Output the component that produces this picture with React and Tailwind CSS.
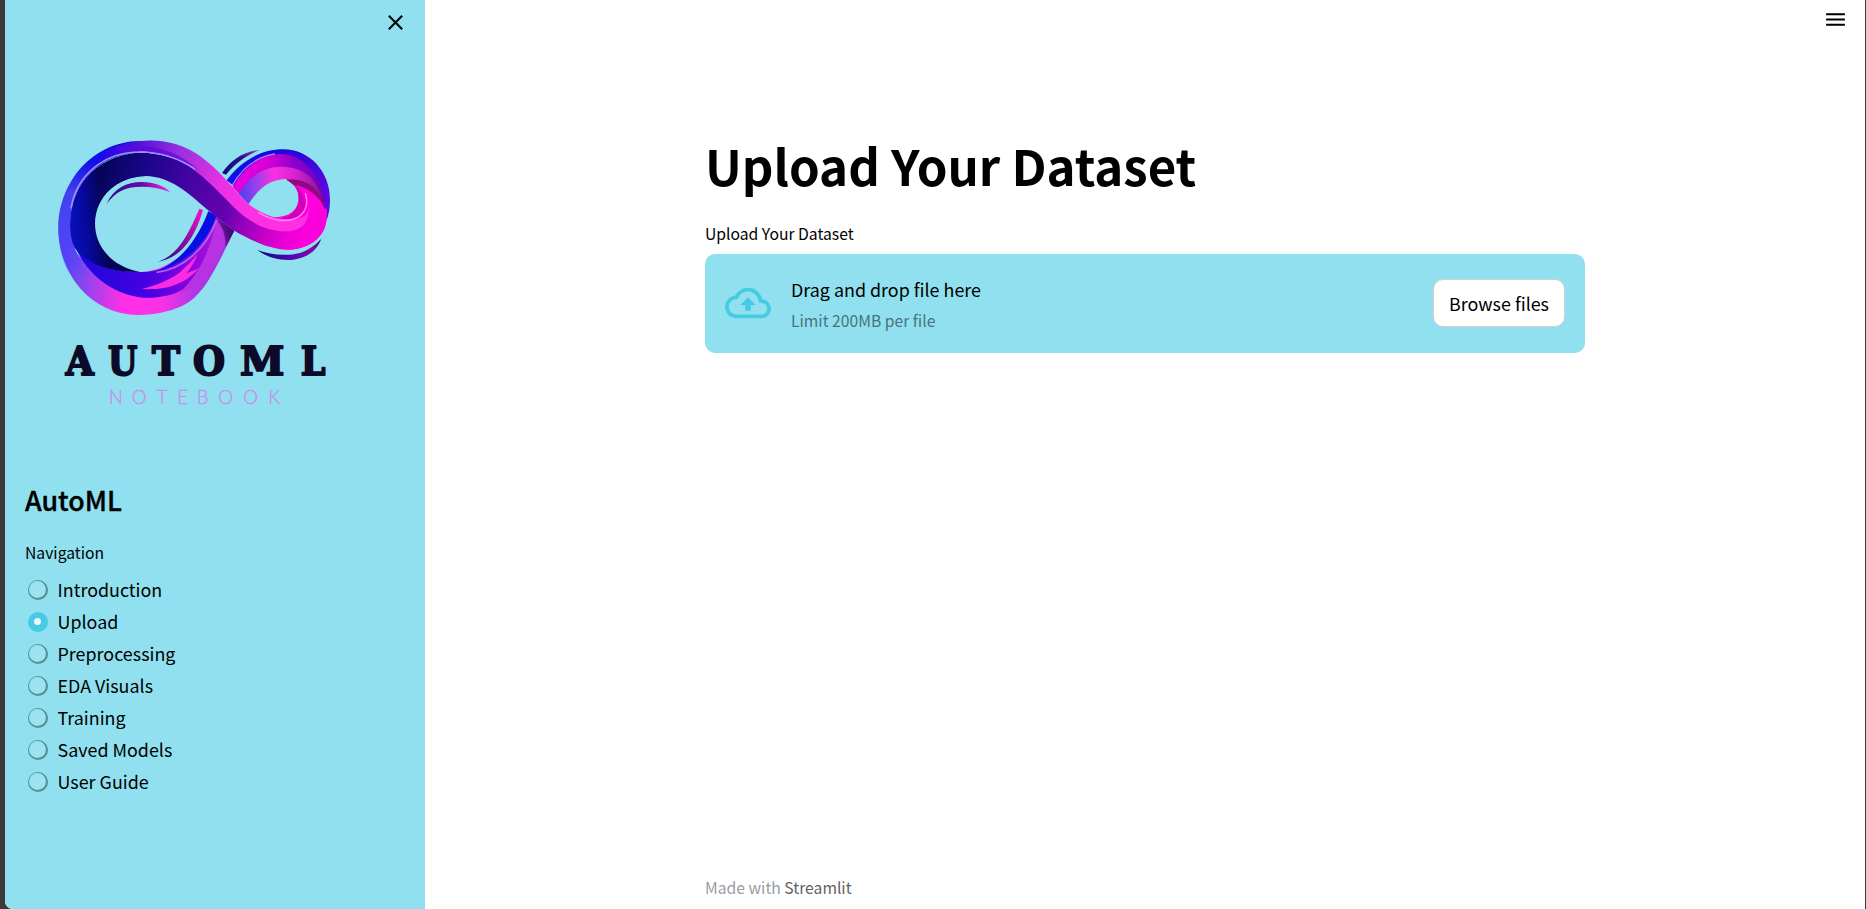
import React from "react";

const NAV = ["Introduction", "Upload", "Preprocessing", "EDA Visuals", "Training", "Saved Models", "User Guide"];

function Logo() {
  return (
    <svg className="block h-[300px] w-[310px]" viewBox="0 0 930 900" aria-label="AutoML Notebook">
      <defs>
        <linearGradient id="outer" gradientUnits="userSpaceOnUse" x1="55" y1="330" x2="580" y2="380">
          <stop offset="0" stopColor="#3f3df5" />
          <stop offset="0.14" stopColor="#7a48f0" />
          <stop offset="0.4" stopColor="#ff2fe6" />
          <stop offset="0.62" stopColor="#fb31e6" />
          <stop offset="0.8" stopColor="#b436e6" />
          <stop offset="1" stopColor="#a030da" />
        </linearGradient>
        <linearGradient id="leftEdge" gradientUnits="userSpaceOnUse" x1="90" y1="450" x2="240" y2="60">
          <stop offset="0" stopColor="#5a44f6" stopOpacity="0" />
          <stop offset="0.25" stopColor="#4c44f6" />
          <stop offset="0.55" stopColor="#4242ee" />
          <stop offset="0.8" stopColor="#1410ea" />
          <stop offset="1" stopColor="#1408e4" />
        </linearGradient>
        <linearGradient id="navy" gradientUnits="userSpaceOnUse" x1="90" y1="300" x2="190" y2="290">
          <stop offset="0" stopColor="#0810bc" />
          <stop offset="0.5" stopColor="#07089a" />
          <stop offset="1" stopColor="#06045a" />
        </linearGradient>
        <linearGradient id="under" gradientUnits="userSpaceOnUse" x1="190" y1="150" x2="740" y2="350">
          <stop offset="0" stopColor="#06055e" />
          <stop offset="0.2" stopColor="#1c058c" />
          <stop offset="0.45" stopColor="#4804a4" />
          <stop offset="0.65" stopColor="#6402b0" />
          <stop offset="0.85" stopColor="#b800c4" />
          <stop offset="1" stopColor="#f000d8" />
        </linearGradient>
        <linearGradient id="over" gradientUnits="userSpaceOnUse" x1="190" y1="70" x2="640" y2="250">
          <stop offset="0" stopColor="#1a08e4" />
          <stop offset="0.2" stopColor="#5a10dc" />
          <stop offset="0.45" stopColor="#9a30e0" />
          <stop offset="0.75" stopColor="#e830e4" />
          <stop offset="1" stopColor="#ff30e4" />
        </linearGradient>
        <linearGradient id="belly" gradientUnits="userSpaceOnUse" x1="110" y1="400" x2="550" y2="330">
          <stop offset="0" stopColor="#1c08dc" />
          <stop offset="0.45" stopColor="#4600e4" />
          <stop offset="0.75" stopColor="#8c04dc" />
          <stop offset="1" stopColor="#b018dc" />
        </linearGradient>
        <linearGradient id="topLoop" gradientUnits="userSpaceOnUse" x1="560" y1="170" x2="870" y2="200">
          <stop offset="0" stopColor="#0614e8" />
          <stop offset="0.4" stopColor="#1808e0" />
          <stop offset="0.7" stopColor="#3404d8" />
          <stop offset="1" stopColor="#5a0adf" />
        </linearGradient>
        <linearGradient id="midLoop" gradientUnits="userSpaceOnUse" x1="590" y1="190" x2="850" y2="180">
          <stop offset="0" stopColor="#e400dc" />
          <stop offset="0.35" stopColor="#d800d8" />
          <stop offset="0.7" stopColor="#8800cc" />
          <stop offset="1" stopColor="#7200bc" />
        </linearGradient>
        <linearGradient id="innerLoop" gradientUnits="userSpaceOnUse" x1="605" y1="210" x2="850" y2="190">
          <stop offset="0" stopColor="#553ff0" />
          <stop offset="0.2" stopColor="#a040ea" />
          <stop offset="0.42" stopColor="#fb2fe2" />
          <stop offset="0.7" stopColor="#d420d0" />
          <stop offset="1" stopColor="#86108f" />
        </linearGradient>
        <linearGradient id="dash" x1="0" y1="0" x2="1" y2="0">
          <stop offset="0" stopColor="#1c0c92" />
          <stop offset="0.55" stopColor="#6e08a6" />
          <stop offset="1" stopColor="#f02cd8" />
        </linearGradient>
        <linearGradient id="dashUp" x1="0" y1="1" x2="1" y2="0">
          <stop offset="0" stopColor="#1c0c72" />
          <stop offset="0.5" stopColor="#8a0aa6" />
          <stop offset="1" stopColor="#f414cc" />
        </linearGradient>
        <linearGradient id="dashBlue" x1="0" y1="1" x2="1" y2="0">
          <stop offset="0" stopColor="#100a82" />
          <stop offset="0.6" stopColor="#2c0e94" />
          <stop offset="1" stopColor="#8c4cc0" />
        </linearGradient>
        <linearGradient id="dashLow" x1="0" y1="0" x2="1" y2="0">
          <stop offset="0" stopColor="#100a82" />
          <stop offset="0.5" stopColor="#4a06b0" />
          <stop offset="0.85" stopColor="#8008a8" />
          <stop offset="1" stopColor="#3a1080" />
        </linearGradient>
        <linearGradient id="shade" gradientUnits="userSpaceOnUse" x1="585" y1="310" x2="525" y2="330">
          <stop offset="0" stopColor="#2c0868" />
          <stop offset="0.5" stopColor="#5a108c" />
          <stop offset="1" stopColor="#9020c8" />
        </linearGradient>
      </defs>

      {/* left ring, outer ribbon */}
      <path fill="url(#outer)" d="M100 350 C110 430 200 440 305 441 C400 436 480 350 515 262 L583 317 C565 352 556 372 541 402 C520 442 497 487 463 518 C425 553 355 570 288 570 C160 565 58 460 55 310 Z" />
      <path fill="url(#leftEdge)" d="M300 48 C150 50 54 180 55 312 C56 362 66 412 90 455 L150 455 C110 400 92 350 91 300 C90 180 170 90 300 82 Z" />
      <path fill="url(#belly)" d="M98 340 C115 400 190 442 305 441 C400 440 480 375 527 275 L548 300 C520 390 480 455 430 492 C400 512 350 520 310 518 C210 510 120 430 98 340 Z" />
      <path fill="#b832e4" d="M530 285 L560 340 C545 385 525 425 500 455 C480 478 455 495 420 502 C475 450 510 380 530 285 Z" />
      <path fill="#fb2be2" d="M305 492 C350 482 395 462 420 442 C440 424 458 405 472 388 C468 405 455 425 440 445 L477 430 C445 466 410 482 372 489 C350 493 325 493 305 492 Z" />
      <path fill="#0610e4" d="M335 441 C400 425 465 365 505 258 L529 274 C500 355 440 420 335 441 Z" />
      <path fill="none" stroke="#a56cf2" strokeWidth="5" d="M350 442 C430 432 500 370 530 285" />
      <path fill="url(#shade)" d="M525 276 L583 317 L557 367 C556 330 548 300 525 276 Z" />

      {/* left ring, inside face */}
      <path fill="url(#navy)" d="M330 82 C180 80 92 170 90 300 C90 325 94 348 104 368 C140 418 210 442 300 441 C220 425 165 370 165 295 C167 215 230 155 318 153 Z" />

      {/* right loop */}
      <path fill="url(#topLoop)" d="M560 166 C600 110 660 73 730 73 C810 74 870 140 870 225 C870 250 866 270 860 285 C850 240 830 190 780 160 C730 130 650 140 590 190 Z" />
      <path fill="url(#midLoop)" d="M578 186 C610 130 660 88 725 87 C790 90 850 150 858 250 C830 190 780 150 735 145 C690 140 640 160 600 210 Z" />
      <path fill="url(#innerLoop)" d="M597 208 C625 155 670 125 725 125 C795 126 835 160 856 250 C820 190 780 165 735 162 C690 165 660 185 625 238 Z" />
      <path fill="none" stroke="#c66cf2" strokeWidth="4" d="M575 184 C605 130 650 95 705 87" />
      <path fill="#ff00dc" d="M738 164 C800 175 850 205 860 280 C858 335 810 375 740 374 C690 350 660 300 680 275 C740 284 775 260 776 220 C777 195 760 175 738 164 Z" />
      <path fill="#8f0880" d="M738 163 C800 160 842 190 857 250 C830 205 795 184 762 180 Z" />
      <path fill="#d400b8" d="M762 180 C785 190 798 215 794 245 C785 275 750 290 715 280 C755 280 777 250 776 220 C775 200 770 190 762 180 Z" />

      {/* crossing ribbon */}
      <path fill="url(#under)" d="M180 145 C240 70 340 70 430 112 C530 160 610 270 700 290 C760 300 810 275 860 250 C870 310 820 374 740 374 C690 372 640 350 583 317 C545 290 520 268 500 252 C440 200 390 155 318 153 C260 154 210 180 180 225 Z" />
      <path fill="#ff00dc" d="M858 252 C866 325 815 374 742 374 C790 350 800 300 776 270 L804 240 Z" opacity=".8" />
      <path fill="url(#over)" d="M195 75 C320 25 410 48 470 86 C540 132 590 205 625 237 C665 268 710 285 765 283 C790 280 802 270 806 250 C806 290 790 315 745 319 C680 322 625 290 580 245 C500 165 430 82 300 79 C260 78 220 85 180 107 Z" />
      <path fill="#5a08d8" opacity=".7" d="M225 68 C330 50 410 75 480 138 C420 100 340 70 240 78 Z" />
      <path fill="none" stroke="#a58cf8" strokeWidth="5" d="M93 250 C110 150 190 82 300 81 C370 82 420 102 465 132" />
      <path fill="none" stroke="#f78cf2" strokeWidth="4" d="M655 262 C700 290 745 292 772 278 C798 262 806 235 796 205" />

      {/* accent strokes */}
      <path fill="url(#dash)" d="M200 236 C222 190 260 171 305 171 C345 172 370 182 391 201 C350 186 310 182 270 188 C240 194 220 210 200 236 Z" />
      <path fill="url(#dashUp)" d="M352 410 C410 395 445 330 478 251 L489 255 C465 340 420 402 352 410 Z" />
      <path fill="url(#dashBlue)" d="M546 144 C575 103 610 80 660 74 C620 91 585 115 558 149 Z" />
      <path fill="url(#dashLow)" d="M652 375 C690 390 740 394 780 384 C808 374 828 358 844 341 C832 374 805 398 760 404 C715 408 680 396 652 375 Z" />

      <g fill="#0d0a28" stroke="#0d0a28" strokeWidth="6" strokeLinejoin="round" fontFamily="'DejaVu Serif', serif" fontWeight="700" fontSize="117">
        <text y="749" x="77" textLength="84" lengthAdjust="spacingAndGlyphs">A</text>
        <text y="749" x="204" textLength="88" lengthAdjust="spacingAndGlyphs">U</text>
        <text y="749" x="336" textLength="84" lengthAdjust="spacingAndGlyphs">T</text>
        <text y="749" x="459" textLength="96" lengthAdjust="spacingAndGlyphs">O</text>
        <text y="749" x="600" textLength="133" lengthAdjust="spacingAndGlyphs">M</text>
        <text y="749" x="782" textLength="74" lengthAdjust="spacingAndGlyphs">L</text>
      </g>
      <text y="837" x="206 275 350 412 470 535 610 685" fill="#c98df0" stroke="#c98df0" strokeWidth="1" fontFamily="Lato, sans-serif" fontWeight="300" fontSize="56">NOTEBOOK</text>
    </svg>
  );
}

function Radio({ label, checked }) {
  return (
    <label className="flex h-8 items-center gap-[9.5px]">
      {checked ? (
        <span className="mt-0.5 flex size-5 items-center justify-center rounded-full bg-[#45cbe4]">
          <span className="mr-px mb-px size-[7.5px] rounded-full bg-[#f0f4f8]" />
        </span>
      ) : (
        <span className="mt-0.5 flex size-5 items-start justify-start rounded-full bg-[#588c96] p-px">
          <span className="size-[17px] rounded-full bg-[#99e4f0]" />
        </span>
      )}
      <span className="text-[17.9px] leading-8">{label}</span>
    </label>
  );
}

export default function App() {
  return (
    <div className="h-[909px] w-[1866px] overflow-hidden bg-[#3b3b3b] pr-px pl-[5px] font-['Noto_Sans_CJK_SC',sans-serif] text-black">
      <div className="flex h-full overflow-hidden rounded-bl-[8px] bg-white">
        <aside className="flex w-[420px] shrink-0 flex-col bg-[#91e0ef]">
          <div className="flex h-[125px] justify-end pt-[10px] pr-[17px]">
            <svg className="size-[25px]" viewBox="0 0 24 24" fill="none" stroke="#000" strokeWidth="2">
              <path d="M5.6 5.6 18.4 18.4M18.4 5.6 5.6 18.4" />
            </svg>
          </div>
          <div className="pl-[35px]"><Logo /></div>
          <div className="flex flex-col px-5 pt-[54px]">
            <h2 className="text-[26.8px] leading-[42px] font-medium [-webkit-text-stroke:0.35px_#000]">AutoML</h2>
            <p className="pt-[18px] text-[15.7px] leading-[28px]">Navigation</p>
            <div className="flex flex-col pt-[6px] pl-[3px]">
              {NAV.map((n) => <Radio key={n} label={n} checked={n === "Upload"} />)}
            </div>
          </div>
        </aside>
        <main className="flex flex-1 flex-col">
          <div className="flex h-[129px] justify-end pt-[7px] pr-[17px]">
            <svg className="size-[25px]" viewBox="0 0 24 24" fill="#000">
              <path d="M3 6h18v2H3zM3 11h18v2H3zM3 16h18v2H3z" />
            </svg>
          </div>
          <div className="ml-[280px] flex w-[880px] flex-1 flex-col">
            <h1 className="text-[49.2px] leading-[72px] font-bold">Upload Your Dataset</h1>
            <p className="pt-[19px] text-[15.7px] leading-[28px]">Upload Your Dataset</p>
            <section className="mt-[6px] flex h-[99px] items-center rounded-[10px] bg-[#91e0ef] px-5">
              <svg className="-mt-0.5 size-[46px]" viewBox="0 0 24 24" fill="#45cbe4">
                <path d="M19.35 10.04A7.49 7.49 0 0 0 12 4C9.11 4 6.6 5.64 5.35 8.04A5.994 5.994 0 0 0 0 14c0 3.31 2.69 6 6 6h13c2.76 0 5-2.24 5-5 0-2.64-2.05-4.78-4.65-4.96zM19 18H6c-2.21 0-4-1.79-4-4 0-2.05 1.53-3.76 3.56-3.97l1.07-.11.5-.95A5.469 5.469 0 0 1 12 6c2.62 0 4.88 1.86 5.39 4.43l.3 1.5 1.53.11A2.98 2.98 0 0 1 22 15c0 1.65-1.35 3-3 3zM8 13h2.55v3h2.9v-3H16l-4-4z" />
              </svg>
              <div className="flex flex-1 flex-col pt-px pl-5">
                <span className="text-[17.9px] leading-[31px]">Drag and drop file here</span>
                <span className="pt-px text-[15.7px] leading-[29px] text-[#48737c]">Limit 200MB per file</span>
              </div>
              <button className="-mt-px h-[48px] w-[132px] rounded-[10px] border border-[#d1cfd2] bg-white text-[17.9px] leading-[44px]">Browse files</button>
            </section>
            <footer className="mt-auto pb-[7px] text-[15.7px] leading-[28px] text-[#9b9b9f]">
              Made with <span className="text-[#5f5f63]">Streamlit</span>
            </footer>
          </div>
        </main>
      </div>
    </div>
  );
}
